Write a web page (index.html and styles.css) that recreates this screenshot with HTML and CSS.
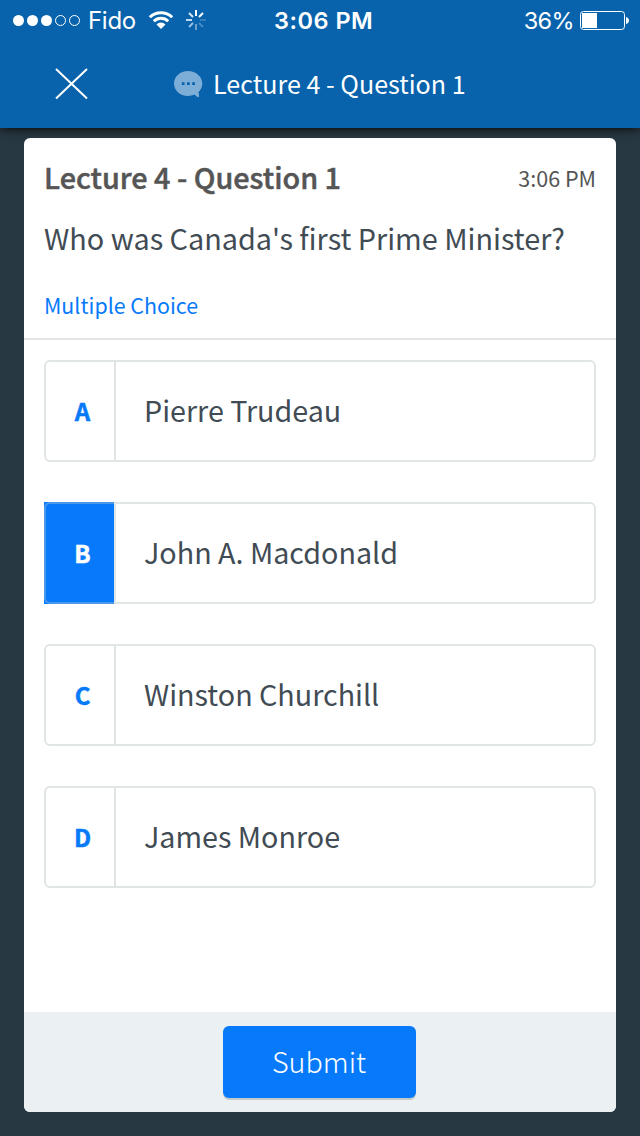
FILE: index.html
```html
<!DOCTYPE html>
<html lang="en">
<head>
<meta charset="utf-8">
<title>Lecture 4 - Question 1</title>
<link rel="stylesheet" href="styles.css">
</head>
<body>
<div class="screen">
  <header class="header">
    <div class="status">
      <div class="status-left">
        <svg class="signal" width="68" height="12" viewBox="0 0 68 12" fill="#fff"><circle cx="5.5" cy="6.5" r="5.5"/><circle cx="19.5" cy="6.5" r="5.5"/><circle cx="33.5" cy="6.5" r="5.5"/><g fill="none" stroke="#fff"><circle cx="47.5" cy="6.5" r="5"/><circle cx="61.5" cy="6.5" r="5"/></g></svg>
        <span class="carrier">Fido</span>
        <svg class="wifi" width="26" height="20" viewBox="0 0 26 20"><g fill="none" stroke="#fff" stroke-width="3"><path d="M1.8 7.2a16 16 0 0 1 22.4 0"/><path d="M5.8 11.2a10.3 10.3 0 0 1 14.4 0"/></g><path d="M8.5 14.4a6.4 6.4 0 0 1 9 0L13 19z" fill="#fff"/></svg>
        <svg class="spinner" width="20" height="20" viewBox="-10 -10 20 20" stroke="#fff" stroke-width="2"><path d="M0-10v6"/><path d="M7-7 3-3"/><path opacity=".18" d="M10 0H4"/><path opacity=".25" d="M7 7 3 3"/><path opacity=".4" d="M0 10V4"/><path opacity=".6" d="M-7 7-3 3"/><path opacity=".75" d="M-10 0h6"/><path opacity=".85" d="M-7-7-3-3"/></svg>
      </div>
      <span class="clock">3:06 PM</span>
      <div class="status-right">
        <span class="percent">36%</span>
        <svg class="battery" width="50" height="20" viewBox="0 0 50 20"><rect x=".5" y="1.5" width="44" height="18" rx="3" fill="none" stroke="#fff"/><path d="M2 3h15v15H2zM46 7c4 1 4 6 0 7z" fill="#fff"/></svg>
      </div>
    </div>
    <div class="nav">
      <svg class="close" width="34" height="32" viewBox="0 0 34 32" stroke="#fff" stroke-width="2"><path d="M1 1 32 30.500M32 1 1 30.500"/></svg>
      <svg class="bubble" width="30" height="28" viewBox="0 0 30 28"><path fill="#7daed8" d="M14 0C6.300 0 0 5.500 0 12.500S6.300 25 14 25c2.300 0 4.600-.5 6.600-1.400 1.200 1.700 3 2.500 4.400 2.600.2-1.700 0-3.300-.6-5 2.400-2.200 3.900-5.300 3.900-8.700C28.300 5.500 21.700 0 14 0z"/><path fill="#0863ac" d="M7.800 11.300h2.700V14H7.800zM13 11.300h2.700V14H13zM18.200 11.300h2.700V14h-2.700z"/></svg>
      <span class="nav-title">Lecture 4 - Question 1</span>
    </div>
  </header>
  <main class="card">
    <section class="question">
      <div class="title-row"><h1 class="title">Lecture 4 - Question 1</h1><span class="time">3:06 PM</span></div>
      <p class="prompt">Who was Canada's first Prime Minister?</p>
      <p class="kind">Multiple Choice</p>
    </section>
    <section class="choices">
      <div class="choice"><span class="letter">A</span><span class="answer">Pierre Trudeau</span></div>
      <div class="choice selected"><span class="letter">B</span><span class="answer">John A. Macdonald</span></div>
      <div class="choice"><span class="letter">C</span><span class="answer">Winston Churchill</span></div>
      <div class="choice"><span class="letter">D</span><span class="answer">James Monroe</span></div>
    </section>
    <footer class="footer"><button class="submit">Submit</button></footer>
  </main>
</div>
</body>
</html>
```
FILE: styles.css
```css
*, *::before { box-sizing: border-box; margin: 0; padding: 0; }
body { background: #283842; font-family: "Noto Sans CJK JP", "Noto Sans CJK SC", sans-serif; }
.screen { width: 640px; height: 1136px; display: flex; flex-direction: column; }
svg { display: block; flex: none; overflow: visible; }
span, h1, p { white-space: nowrap; }
.header { height: 128px; flex: none; position: relative; background: #0863ac; color: #fff; box-shadow: 0 0 11px #000; }
.status { height: 40px; display: grid; grid-template-columns: 274px 1fr auto; align-items: center; font: 24px/40px Inter, sans-serif; }
.status-left, .status-right { display: flex; align-items: center; }
.carrier, .clock, .percent { padding-top: 2px; line-height: 38px; }
.signal { margin-left: 13px; }
.carrier { width: 60px; margin-left: 7px; letter-spacing: -.3px; }
.spinner { margin-left: 12px; }
.clock { font-weight: 600; font-size: 23.500px; letter-spacing: .5px; }
.percent { font-size: 23.500px; letter-spacing: -.6px; }
.battery { margin: 0 10px 0 6px; }
.nav { height: 88px; display: flex; align-items: center; }
.close { margin-left: 55px; }
.bubble { margin: 2px 0 0 85px; }
.nav-title { margin-left: 9px; padding-bottom: 2px; font-size: 25.100px; line-height: 40px; }
.card { margin: 10px 24px 24px; height: 974px; border-radius: 6px; overflow: hidden; background: #fff; display: flex; flex-direction: column; }
.question { height: 202px; flex: none; padding: 15px 20px 0; border-bottom: 2px solid #e1e5e5; }
.title-row { height: 48px; display: flex; justify-content: space-between; align-items: center; }
.title { font-size: 28.800px; font-weight: 500; line-height: 48px; color: #555; -webkit-text-stroke: .5px #555; }
.time { font-size: 21.500px; color: #555; }
.prompt { font-size: 28.800px; line-height: 48px; margin-top: 13px; color: #414b54; }
.kind { font-size: 21.400px; line-height: 36px; margin-top: 25px; color: #077afb; }
.choices { padding: 20px 20px 0; flex: 1; display: flex; flex-direction: column; gap: 40px; }
.choice { height: 102px; border: 2px solid #e0e5e5; border-radius: 6px; display: flex; align-items: center; }
.letter { width: 70px; height: 98px; padding-left: 5px; border-right: 2px solid #dfe4e5; color: #077afb; font-weight: 700; font-size: 24px; line-height: 98px; text-align: center; -webkit-text-stroke: .5px currentColor; }
.answer { padding: 0 0 2px 28px; font-size: 28.700px; line-height: 48px; color: #414b54; }
.selected { position: relative; border-left: 0; border-radius: 0 6px 6px 0; }
.selected .letter { width: 70px; height: 102px; flex: none; padding-left: 7px; border: 0; background: #077afb; color: #fff; line-height: 102px; }
.selected .letter::before { content: ""; position: absolute; left: 0; top: -2px; width: 70px; height: 102px; border: 2px solid #4b98ea; border-right: 0; border-radius: 6px 0 0 6px; }
.selected .answer { height: 98px; padding-left: 28px; border-left: 2px solid #dfe4e5; line-height: 96px; }
.footer { height: 100px; flex: none; padding-top: 14px; background: #ebf0f3; display: flex; justify-content: center; align-items: flex-start; }
.submit { width: 193px; height: 72px; padding-bottom: 4px; margin-right: 2px; border: 0; border-radius: 6px; background: #077afb; color: #fff; font-family: inherit; font-size: 28.700px; font-weight: 300; box-shadow: 0 2px #c4c9cc; }
```
